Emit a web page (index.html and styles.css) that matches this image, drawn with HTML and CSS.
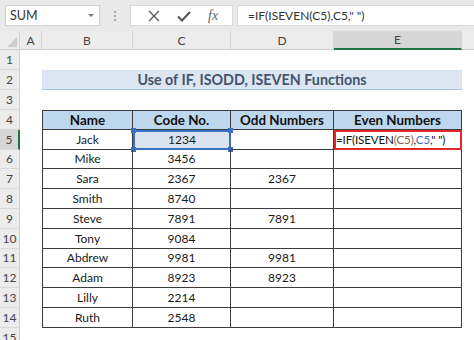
FILE: index.html
```html
<!DOCTYPE html>
<html>
<head>
<meta charset="utf-8">
<link rel="stylesheet" href="styles.css">
</head>
<body>
<div class="toolbar">
  <div class="namebox"><span>SUM</span><span class="caret"></span></div>
  <div class="dots"><i></i><i></i><i></i></div>
  <div class="fxbox">
    <svg class="ico" width="14" height="14" viewBox="0 0 14 14"><path d="M2 2 L12 12 M12 2 L2 12" stroke="#555" stroke-width="1.3" fill="none"/></svg>
    <svg class="ico" width="16" height="14" viewBox="0 0 16 14"><path d="M2 7.5 L6 11.5 L14 3" stroke="#555" stroke-width="2" fill="none"/></svg>
    <span class="fx">fx</span>
  </div>
  <div class="formula">=IF(ISEVEN(C5),C5," ")</div>
</div>
<div class="sheet">
  <div class="corner"><span class="tri"></span></div>
  <div class="ch">A</div><div class="ch">B</div><div class="ch">C</div><div class="ch">D</div><div class="ch sel">E</div><div class="ch last"></div>

  <div class="rh">1</div><div class="blank full"></div>
  <div class="rh">2</div><div class="c"></div><div class="title">Use of IF, ISODD, ISEVEN Functions</div><div class="c"></div>
  <div class="rh">3</div><div class="blank full"></div>

  <div class="rh">4</div><div class="c"></div><div class="t th first">Name</div><div class="t th">Code No.</div><div class="t th">Odd Numbers</div><div class="t th">Even Numbers</div><div class="c"></div>
  <div class="rh rsel">5</div><div class="c"></div><div class="t first">Jack</div><div class="t csel">1234<i class="h h1"></i><i class="h h2"></i><i class="h h3"></i><i class="h h4"></i></div><div class="t"></div><div class="t edit"><span>=IF(ISEVEN<b class="br">(C5)</b>,<b class="bl">C5</b>,"&nbsp;")</span></div><div class="c"></div>
  <div class="rh">6</div><div class="c"></div><div class="t first">Mike</div><div class="t">3456</div><div class="t"></div><div class="t"></div><div class="c"></div>
  <div class="rh">7</div><div class="c"></div><div class="t first">Sara</div><div class="t">2367</div><div class="t">2367</div><div class="t"></div><div class="c"></div>
  <div class="rh">8</div><div class="c"></div><div class="t first">Smith</div><div class="t">8740</div><div class="t"></div><div class="t"></div><div class="c"></div>
  <div class="rh">9</div><div class="c"></div><div class="t first">Steve</div><div class="t">7891</div><div class="t">7891</div><div class="t"></div><div class="c"></div>
  <div class="rh">10</div><div class="c"></div><div class="t first">Tony</div><div class="t">9084</div><div class="t"></div><div class="t"></div><div class="c"></div>
  <div class="rh">11</div><div class="c"></div><div class="t first">Abdrew</div><div class="t">9981</div><div class="t">9981</div><div class="t"></div><div class="c"></div>
  <div class="rh">12</div><div class="c"></div><div class="t first">Adam</div><div class="t">8923</div><div class="t">8923</div><div class="t"></div><div class="c"></div>
  <div class="rh">13</div><div class="c"></div><div class="t first">Lilly</div><div class="t">2214</div><div class="t"></div><div class="t"></div><div class="c"></div>
  <div class="rh">14</div><div class="c"></div><div class="t first">Ruth</div><div class="t">2548</div><div class="t"></div><div class="t"></div><div class="c"></div>
  <div class="rh">15</div><div class="blank full"></div>
</div>
</body>
</html>
```
FILE: styles.css
```css
* { box-sizing: border-box; }
html, body { margin: 0; padding: 0; }
body {
  width: 474px; height: 340px; overflow: hidden;
  background: #fff;
  font-family: Lato, "Open Sans", sans-serif;
}
.toolbar {
  height: 31px;
  background: #e9e9e9;
  display: flex;
  align-items: flex-start;
  padding: 5px 0 0 5px;
}
.namebox {
  width: 95px; height: 21px;
  background: #fff;
  border: 1px solid #d0d0d0;
  display: flex; align-items: center; justify-content: space-between;
  padding: 0 5px 0 4px;
  font-size: 12.5px; color: #333;
}
.caret {
  width: 0; height: 0;
  border-left: 3px solid transparent; border-right: 3px solid transparent;
  border-top: 3px solid #777;
}
.dots {
  width: 30px; height: 21px;
  display: flex; flex-direction: column; align-items: center; justify-content: center; gap: 2px;
}
.dots i { width: 2px; height: 2px; background: #a8a8a8; display: block; }
.fxbox {
  width: 103px; height: 21px;
  background: #fff;
  border: 1px solid #d8d8d8;
  display: flex; align-items: center; justify-content: space-around;
  padding: 0 6px 0 8px;
}
.fx {
  font-family: "Liberation Serif", serif; font-style: italic;
  font-size: 14px; color: #666;
}
.formula {
  margin-left: 4px;
  flex: 1; height: 21px;
  background: #fff;
  border: 1px solid #d8d8d8; border-right: none;
  font-size: 12px; color: #333;
  padding: 2px 0 0 10px;
}
.sheet {
  display: grid;
  grid-template-columns: 20px 22px 91px 98px 103px 128px 12px;
  grid-template-rows: 19px 20px 20px 20px repeat(11, 19.8px) 20px;
}
.corner { background: #ececec; border-right: 1px solid #d4d4d4; border-bottom: 1px solid #cfcfcf; position: relative; }
.tri {
  position: absolute; right: 2px; bottom: 2px;
  width: 0; height: 0;
  border-left: 10px solid transparent; border-bottom: 10px solid #cdcdcd;
}
.ch {
  background: #ececec;
  border-right: 1px solid #d4d4d4; border-bottom: 1px solid #cfcfcf;
  font-size: 12px; color: #444;
  display: flex; align-items: center; justify-content: center;
}
.ch.sel { background: #d6d6d6; border-bottom: 2px solid #217346; }
.ch.last { border-right: none; }
.rh {
  background: #ececec;
  border-right: 1px solid #cfcfcf; border-bottom: 1px solid #d9d9d9;
  font-size: 12px; color: #444;
  display: flex; align-items: center; justify-content: center;
}
.rh.rsel { background: #d6d6d6; border-right: 2px solid #217346; }
.full { grid-column: 2 / 8; }
.title {
  grid-column: 3 / 7;
  background: #dce6f2;
  border-bottom: 1px solid #a9c3e3;
  font-weight: 700; font-size: 14.3px; color: #44546a;
  display: flex; align-items: center; justify-content: center;
}
.t {
  border-right: 1px solid #3c3c3c; border-bottom: 1px solid #3c3c3c;
  font-size: 12px; color: #1a1a1a;
  display: flex; align-items: center; justify-content: center;
  position: relative;
}
.t.first { border-left: 1px solid #3c3c3c; }
.th { background: #bdd7ee; border-top: 1px solid #3c3c3c; font-weight: 700; font-size: 13.4px; color: #111; }
.csel { background: #dbe3f0; border: 2px solid #3b6fc2; }
.h { position: absolute; width: 5px; height: 5px; background: #3b6fc2; }
.h1 { left: -4px; top: -4px; }
.h2 { right: -4px; top: -4px; }
.h3 { left: -4px; bottom: -4px; }
.h4 { right: -4px; bottom: -4px; }
.edit { border: 2px solid #e0292b; justify-content: flex-start; padding-left: 0; font-size: 11.6px; letter-spacing: -0.15px; color: #111; }
.edit b { font-weight: 400; }
.br { color: #9a5b46; }
.bl { color: #3f6cc4; }
```
